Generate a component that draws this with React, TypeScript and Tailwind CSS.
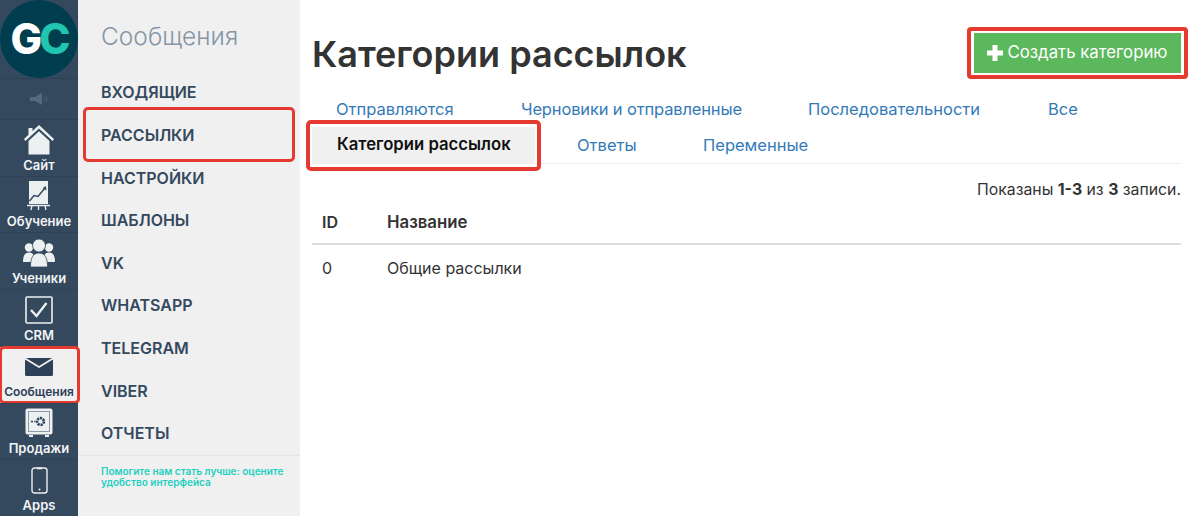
import type { ReactNode } from "react";

const font = { fontFamily: "Inter, 'Noto Sans', sans-serif" };

function HouseIcon() {
  return (
    <svg width="30" height="30" viewBox="0 0 30 30" fill="#edf0f1">
      <path d="M15 0 L30 14 L28.6 16 L15 3.4 L1.4 16 L0 14 L4.5 9.8 V3 H8.5 V6.1 Z" />
      <path d="M15 6.2 L25.5 16 V29.5 H4.5 V16 Z" />
    </svg>
  );
}

function BoardIcon() {
  return (
    <svg width="26" height="30" viewBox="0 0 26 30">
      <rect x="3" y="0" width="19" height="23" fill="#edf0f1" />
      <path d="M3.5 20 L8 14.5 L12 15.5 L19 7" fill="none" stroke="#34495e" strokeWidth="1.5" />
      <path d="M20 5 L20.4 9.5 L16.6 7 Z" fill="#34495e" />
      <path d="M1 24.5 H24 M6 24.5 L5 29 M12.5 24.5 V29 M19 24.5 L20 29" stroke="#edf0f1" strokeWidth="1.3" />
    </svg>
  );
}

function UsersIcon() {
  return (
    <svg width="32" height="28" viewBox="0 0 32 28" fill="#edf0f1">
      <circle cx="6" cy="8.5" r="4.2" />
      <circle cx="26" cy="8.5" r="4.2" />
      <path d="M0 23 C0 16.5 2 13.5 6 13.5 C10 13.5 12 16.5 12 23 Z" />
      <path d="M32 23 C32 16.5 30 13.5 26 13.5 C22 13.5 20 16.5 20 23 Z" />
      <circle cx="16" cy="6.5" r="6.5" stroke="#34495e" strokeWidth="0.8" />
      <path d="M7.5 28 C7.5 18 10.5 14 16 14 C21.5 14 24.5 18 24.5 28 Z" stroke="#34495e" strokeWidth="0.8" />
    </svg>
  );
}

function CheckIcon() {
  return (
    <svg width="28" height="28" viewBox="0 0 28 28" fill="none">
      <rect x="1" y="1" width="26" height="26" rx="1" stroke="#edf0f1" strokeWidth="1.6" />
      <path d="M6 14 L11.5 20 L21.5 7" stroke="#edf0f1" strokeWidth="2.4" />
    </svg>
  );
}

function MailIcon() {
  return (
    <svg width="28" height="18" viewBox="0 0 28 18" fill="#2d4159">
      <path d="M1 0 H27 L14 8 Z" />
      <path d="M0 1.5 L14 10 L28 1.5 V16.5 Q28 18 26.5 18 H1.5 Q0 18 0 16.5 Z" />
    </svg>
  );
}

function SafeIcon() {
  return (
    <svg width="28" height="30" viewBox="0 0 28 30" fill="none">
      <rect x="0.5" y="0.5" width="27" height="26" rx="2" fill="#edf0f1" />
      <rect x="3.5" y="3.5" width="21" height="20" fill="#edf0f1" stroke="#8c9aa8" strokeWidth="1" />
      <circle cx="15.5" cy="13.5" r="3.4" stroke="#2d4159" strokeWidth="2.6" strokeDasharray="2.2 0.8" />
      <path d="M6 13.5 H8 M9.2 13.5 H10.4" stroke="#2d4159" strokeWidth="1.4" />
      <path d="M4 27 H8 V29 H4 Z M20 27 H24 V29 H20 Z" fill="#edf0f1" />
    </svg>
  );
}

function PhoneIcon() {
  return (
    <svg width="17" height="27" viewBox="0 0 17 27" fill="none">
      <rect x="1" y="1" width="15" height="25" rx="2.5" stroke="#edf0f1" strokeWidth="1.4" />
      <path d="M6 1.5 H11" stroke="#edf0f1" strokeWidth="1.6" />
      <circle cx="8.5" cy="22.5" r="1" fill="#edf0f1" />
    </svg>
  );
}

function SpeakerIcon() {
  return (
    <svg width="18" height="12" viewBox="0 0 18 12" fill="#566a7e">
      <path d="M0 4 H5 L12 0 V12 L5 8 H0 Z" />
      <path d="M14 3 Q16 6 14 9 M16 2 Q18 6 16 10" fill="none" stroke="#4a5f73" strokeWidth="0.8" />
    </svg>
  );
}

function RailItem({ icon, label, active }: { icon: ReactNode; label: string; active?: boolean }) {
  return (
    <div
      className={`relative h-[56.8px] flex flex-col items-center justify-end pb-[3px] border-t border-[#2e4257] ${
        active ? "bg-[#f0f0f0] text-[#2d4159]" : "text-[#f2f4f5]"
      }`}
    >
      <div className="h-[32px] flex items-center justify-center mb-[1px]">{icon}</div>
      <span className={`font-semibold leading-[16px] whitespace-nowrap ${active ? "text-[12px]" : "text-[13px]"}`}>{label}</span>
      {active && <span className="absolute left-[-1px] top-[-1px] right-[-2px] bottom-[-1px] border-[3px] border-[#e53a30] rounded-[5px]" />}
    </div>
  );
}

const menu = ["Входящие", "Рассылки", "Настройки", "Шаблоны", "VK", "WhatsApp", "Telegram", "Viber", "Отчеты"];

function MenuPanel() {
  return (
    <aside className="w-[222px] shrink-0 h-full bg-[#f0f0f0] flex flex-col">
      <h2 className="pl-[23px] pt-[20px] h-[71.2px] text-[24.5px] leading-[32px] font-light text-[#8696a5]">Сообщения</h2>
      <nav className="flex flex-col">
        {menu.map((item) => (
          <div key={item} className="relative h-[42.6px] pl-[23px] flex items-center text-[16px] font-semibold uppercase text-[#34495e]">
            {item}
            {item === "Рассылки" && (
              <span className="absolute left-[5px] top-[-7px] w-[212px] h-[55px] border-[3px] border-[#e53a30] rounded-[5px]" />
            )}
          </div>
        ))}
      </nav>
      <div className="border-t border-[#e4e4e4] pl-[23px] pr-[10px] pt-[10px] text-[10px] leading-[11px] font-semibold text-[#1fcfc1]">
        Помогите нам стать лучше: оцените удобство интерфейса
      </div>
    </aside>
  );
}

export default function App() {
  return (
    <div className="w-[1199px] h-[516px] flex overflow-hidden bg-white" style={font}>
      <aside className="w-[78px] shrink-0 h-full bg-[#34495e] flex flex-col">
        <div className="h-[78px] w-[78px] rounded-full bg-[#003e4f] flex items-center justify-center text-[42px] font-extrabold tracking-[-3px]">
          <span className="text-white">G</span>
          <span className="text-[#1fc5ae]">C</span>
        </div>
        <div className="h-[41px] border-t border-[#2e4257] flex items-center justify-center">
          <SpeakerIcon />
        </div>
        <RailItem icon={<HouseIcon />} label="Сайт" />
        <RailItem icon={<BoardIcon />} label="Обучение" />
        <RailItem icon={<UsersIcon />} label="Ученики" />
        <RailItem icon={<CheckIcon />} label="CRM" />
        <RailItem icon={<MailIcon />} label="Сообщения" active />
        <RailItem icon={<SafeIcon />} label="Продажи" />
        <RailItem icon={<PhoneIcon />} label="Apps" />
      </aside>
      <MenuPanel />
      <main className="flex-1 pl-[12px] pr-[18px] text-[#333]">
        <div className="h-[91px] flex items-start justify-between">
          <h1 className="mt-[32px] text-[36px] leading-[44px] font-semibold text-[#333]">Категории рассылок</h1>
          <button className="relative mt-[33px] w-[207px] h-[40px] bg-[#5cb85c] text-white text-[16.8px] flex items-center justify-center gap-[4px]">
            <svg width="16" height="16" viewBox="0 0 16 16" fill="white">
              <path d="M5.5 0 H10.5 V5.5 H16 V10.5 H10.5 V16 H5.5 V10.5 H0 V5.5 H5.5 Z" />
            </svg>
            Создать категорию
            <span className="absolute left-[-7px] top-[-6px] right-[-7px] bottom-[-6px] border-[4px] border-[#e53a30] rounded-[4px]" />
          </button>
        </div>
        <div className="h-[36px] flex items-center text-[16.5px] text-[#337ab7]">
          <span className="ml-[24px] w-[185px]">Отправляются</span>
          <span className="w-[287px] tracking-[-0.15px]">Черновики и отправленные</span>
          <span className="w-[240px]">Последовательности</span>
          <span>Все</span>
        </div>
        <div className="h-[37px] flex items-center text-[16.5px] text-[#337ab7] border-b border-[#eee]">
          <span className="relative w-[223px] h-[37px] pl-[25px] bg-[#f0f0f0] text-[#111] text-[16.7px] font-semibold flex items-center">
            Категории рассылок
            <span className="absolute left-[-6px] top-[-7px] right-[-6px] bottom-[-7px] border-[4px] border-[#e53a30] rounded-[5px]" />
          </span>
          <span className="ml-[42px] w-[126px]">Ответы</span>
          <span>Переменные</span>
        </div>
        <div className="mt-[20px] text-right text-[15.8px] leading-[12px]">
          Показаны <b>1-3</b> из <b>3</b> записи.
        </div>
        <table className="w-full mt-[4px] text-[16px] leading-[24px] border-collapse">
          <thead>
            <tr className="border-b-2 border-[#ddd] h-[44px]">
              <th className="w-[75px] pl-[10px] text-left font-semibold align-middle">ID</th>
              <th className="text-left font-semibold text-[16.8px] leading-[24px] align-middle">Название</th>
            </tr>
          </thead>
          <tbody>
            <tr className="h-[46px]">
              <td className="pl-[10px]">0</td>
              <td>Общие рассылки</td>
            </tr>
          </tbody>
        </table>
      </main>
    </div>
  );
}
